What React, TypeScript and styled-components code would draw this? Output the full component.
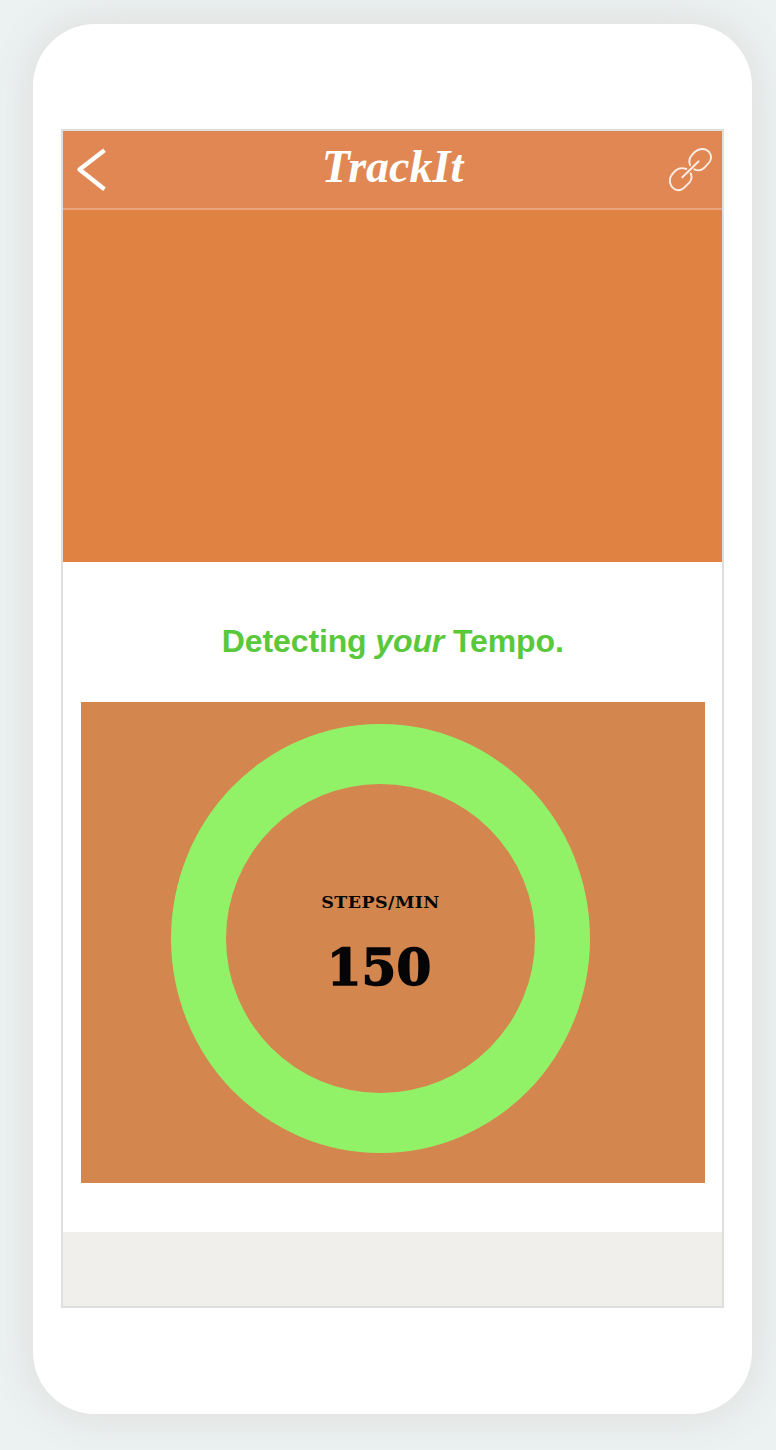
import React from "react";
import styled, { createGlobalStyle } from "styled-components";

const GlobalStyle = createGlobalStyle`
  * { box-sizing: border-box; }
  body {
    margin: 0;
    background: #ecf1f1;
    font-family: "Liberation Sans", Arial, sans-serif;
  }
`;

const Page = styled.main`
  width: 776px;
  height: 1450px;
  padding: 23.5px 23.5px 0 33px;
  overflow: hidden;
  background: #ecf1f1;
`;

const Phone = styled.div`
  width: 719.4px;
  height: 1390.5px;
  padding: 105.5px 28px 0;
  border-radius: 62px;
  background: #fff;
  box-shadow: 0 0 44px rgba(130, 105, 95, 0.15);
`;

const Screen = styled.div`
  display: flex;
  flex-direction: column;
  width: 663px;
  height: 1179px;
  border: 2px solid #dddfe0;
  background: #fff;
`;

const Header = styled.header`
  display: grid;
  grid-template-columns: 60px 1fr 60px;
  align-items: center;
  flex: none;
  height: 79px;
  background: #e18753;
  border-bottom: 2px solid #e9a47c;
`;

const IconButton = styled.button<{ $end?: boolean }>`
  display: flex;
  justify-content: ${(p) => (p.$end ? "flex-end" : "flex-start")};
  padding: ${(p) => (p.$end ? "0 10px 0 0" : "0 0 0 13px")};
  border: 0;
  background: none;
  color: #fff;
`;

const Logo = styled.h1`
  margin: 0 0 5px;
  text-align: center;
  white-space: nowrap;
  font: italic 700 46px/60px "Liberation Serif", serif;
  color: #fff;
`;

const Hero = styled.div`
  flex: none;
  height: 352px;
  background: #df8242;
`;

const Content = styled.section`
  flex: 1;
  padding: 61px 17.5px 0 18px;
`;

const Title = styled.h2`
  margin: 0 0 42px;
  text-align: center;
  white-space: nowrap;
  font-size: 32px;
  line-height: 37px;
  letter-spacing: -0.12px;
  color: #5ac83b;
`;

const TempoCard = styled.div`
  height: 480.5px;
  padding: 21.5px 0 0 90px;
  background: #d4864f;
`;

const Ring = styled.div`
  display: flex;
  flex-direction: column;
  align-items: center;
  width: 419px;
  height: 429.5px;
  padding-top: 106px;
  border: solid #92f267;
  border-width: 60px 55px;
  border-radius: 50%;
  font-family: "DejaVu Serif", serif;
  font-weight: 700;
  color: #050505;
`;

const Unit = styled.span`
  font-size: 17.5px;
  line-height: 24px;
  letter-spacing: 0.4px;
`;

const Steps = styled.span`
  margin: 22px 3px 0 0;
  font-size: 50px;
  line-height: 64px;
  -webkit-text-stroke: 1.5px currentColor;
`;

const Footer = styled.footer`
  flex: none;
  height: 74.5px;
  background: #f0efeb;
`;

export default function App() {
  return (
    <>
      <GlobalStyle />
      <Page>
        <Phone>
          <Screen>
            <Header>
              <IconButton aria-label="Back">
                <svg width="32" height="46" viewBox="0 0 32 46" fill="none" stroke="currentColor" strokeWidth="4.4">
                  <path d="M28.500 3.200 3.500 22.500 28.500 42.300" strokeLinejoin="round" />
                </svg>
              </IconButton>
              <Logo>TrackIt</Logo>
              <IconButton $end aria-label="Link">
                <svg width="44" height="44" viewBox="0 0 44 44" fill="none" stroke="#fceee6" strokeWidth="1.9" strokeLinecap="round">
                  <path d="M22 17C20.800 13.500 21 10 24 6.800L27 3.800C30 1 34 .3 38 1.700C42.500 4 44 8.500 42.300 12.500C41.500 14.500 38.500 17.500 36 20C33.500 22.400 29.500 22.800 26.300 21.300" />
                  <path d="M18.300 21C14.500 19.500 10.800 20 8 22.300C6 24 3.500 26.800 2.700 28.700C1 33 2 38.300 6.300 41C9.500 43 13 42.300 15.500 40.300L21.500 34.300C24 31.500 24 28.300 22.700 25.300" />
                  <path d="M14.300 29.300 30.700 13.300" />
                </svg>
              </IconButton>
            </Header>
            <Hero />
            <Content>
              <Title>
                Detecting <em>your</em> Tempo.
              </Title>
              <TempoCard>
                <Ring>
                  <Unit>STEPS/MIN</Unit>
                  <Steps>150</Steps>
                </Ring>
              </TempoCard>
            </Content>
            <Footer />
          </Screen>
        </Phone>
      </Page>
    </>
  );
}
